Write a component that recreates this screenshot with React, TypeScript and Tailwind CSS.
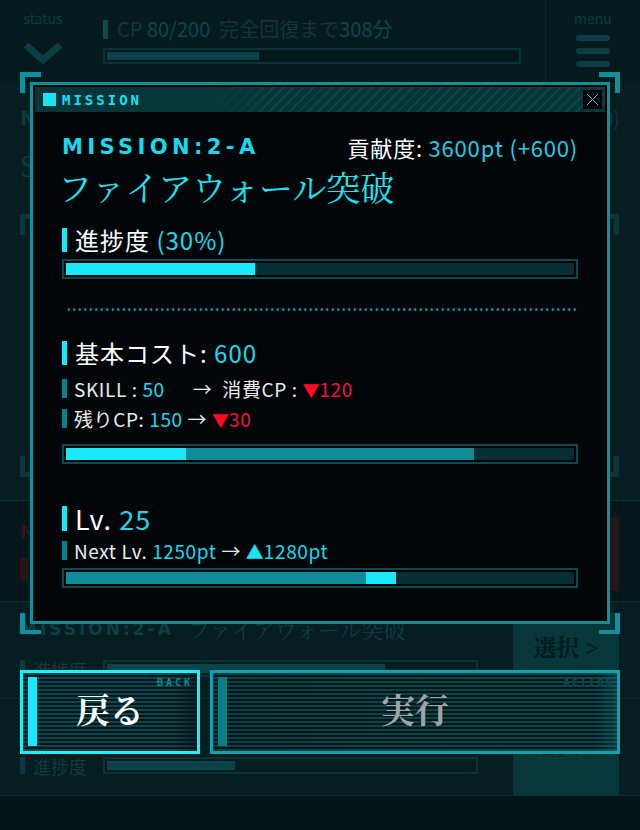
import type { ReactNode } from "react"

const sans = "font-['Noto_Sans_CJK_JP','Noto_Sans',sans-serif]"
const serif = "font-['Liberation_Serif','Noto_Serif_CJK_JP','Noto_Sans_CJK_JP',serif]"
const tech = "font-['DejaVu_Sans','Noto_Sans_CJK_JP',sans-serif]"
const pixel = "font-['DejaVu_Sans_Mono',monospace]"

const stripes =
  "bg-[repeating-linear-gradient(180deg,#0c464c_0px,#0c464c_2px,#03171b_2px,#03171b_4px)]"

function Meter({ children }: { children: ReactNode }) {
  return (
    <div className="h-[20px] border-2 border-[#0a4a52] bg-black p-[2px]">
      <div className="flex h-full bg-[#062f35]">{children}</div>
    </div>
  )
}

function Heading({ children }: { children: ReactNode }) {
  return (
    <div className="flex h-[24px] items-center gap-[8px]">
      <span className="h-full w-[5px] bg-[#1ae6f6]" />
      <span className="text-[24px] leading-none tracking-[1px] text-white">{children}</span>
    </div>
  )
}

function SubLine({ children }: { children: ReactNode }) {
  return (
    <div className="flex h-[19px] items-center gap-[7px]">
      <span className="h-full w-[5px] bg-[#0d7f8a]" />
      <span className="whitespace-pre text-[19px] leading-none tracking-[0.6px] text-[#ececec]">{children}</span>
    </div>
  )
}

function Corner({ pos }: { pos: string }) {
  return <span className={`absolute h-[21px] w-[21px] border-[#0f909b] ${pos}`} />
}

function BgRow({ fill, title }: { fill: string; title: boolean }) {
  return (
    <div className="flex h-[97px] border-b border-[#0a2b30] pl-[20px] pr-[21px]">
      <div className="flex flex-1 flex-col">
        <div className={`mt-[16px] flex h-[24px] items-center gap-[14px] ${title ? "" : "opacity-0"}`}>
          <span className={`${tech} text-[17px] font-bold tracking-[3px] text-[#0e3d43]`}>MISSION:2-A</span>
          <span className={`${serif} text-[22px] text-[#113c42]`}>ファイアウォール突破</span>
        </div>
        <div className="mt-[18px] flex h-[17px] items-center">
          <span className="h-full w-[5px] bg-[#0a3a40]" />
          <span className="ml-[8px] w-[70px] text-[18px] leading-none text-[#123b40]">進捗度</span>
          <div className="h-[17px] w-[375px] border-2 border-[#0a3338] p-[2px]">
            <div className={`h-full bg-[#0b4349] ${fill}`} />
          </div>
        </div>
      </div>
      <div className="mt-[11px] flex h-[86px] w-[106px] items-start justify-center bg-[#07363b] pt-[24px]">
        <span className={`${serif} text-[23px] font-bold leading-none text-[#021a1d]`}>選択 &gt;</span>
      </div>
    </div>
  )
}

export default function App() {
  return (
    <div className={`relative h-[830px] w-[640px] overflow-hidden bg-[#061d21] ${sans}`}>
      {/* background screen */}
      <div className="flex h-full flex-col">
        <header className="flex h-[82px] bg-[#041a1d]">
          <div className="flex w-[86px] flex-col items-center pt-[8px]">
            <span className="text-[14px] leading-[20px] text-[#0c3b41]">status</span>
            <svg width="40" height="22" viewBox="0 0 40 22" className="mt-[14px]">
              <polyline points="3,3 20,18 37,3" fill="none" stroke="#0b3e44" strokeWidth="7" />
            </svg>
          </div>
          <div className="flex-1 pl-[17px] pt-[19px]">
            <div className="flex h-[20px] items-center gap-[9px]">
              <span className="h-[19px] w-[5px] bg-[#0b4a50]" />
              <span className="whitespace-pre text-[20px] leading-none text-[#12363a]">
                CP <span className="text-[#0c474d]">80/200</span>  完全回復まで
                <span className="text-[#0c474d]">308分</span>
              </span>
            </div>
            <div className="mt-[9px] h-[16px] w-[418px] border-2 border-[#0a3237] p-[2px]">
              <div className="h-full w-[152px] bg-[#0b4349]" />
            </div>
          </div>
          <div className="flex w-[95px] flex-col items-center border-l border-[#0a2a2e] pt-[8px]">
            <span className="text-[14px] leading-[20px] text-[#0c3b41]">menu</span>
            <div className="mt-[7px] flex flex-col gap-[7px]">
              <span className="h-[6px] w-[34px] rounded-full bg-[#0b3e44]" />
              <span className="h-[6px] w-[34px] rounded-full bg-[#0b3e44]" />
              <span className="h-[6px] w-[34px] rounded-full bg-[#0b3e44]" />
            </div>
          </div>
        </header>

        <section className="flex h-[418px] flex-col px-[20px]">
          <div className="mt-[26px] flex h-[20px] items-center justify-between text-[20px] text-[#0c3a40]">
            <span className={`${tech} font-bold`}>NEW MISSION</span>
            <span>貢献度: 3000pt (+500)</span>
          </div>
          <div className={`${serif} mt-[22px] text-[32px] leading-none text-[#0c3a40]`}>SQLインジェクション</div>
          <div className="relative mt-[32px] mr-[1px] h-[263px]">
            <Corner pos="left-0 top-0 border-l-[5px] border-t-[5px] !border-[#0b353b]" />
            <Corner pos="right-0 top-0 border-r-[5px] border-t-[5px] !border-[#0b353b]" />
            <Corner pos="left-0 bottom-0 border-l-[5px] border-b-[5px] !border-[#0b353b]" />
            <Corner pos="right-0 bottom-0 border-r-[5px] border-b-[5px] !border-[#0b353b]" />
          </div>
        </section>

        <section className="flex h-[102px] border-y border-[#0b2c30] bg-[#05171a] pl-[20px] pr-[21px]">
          <div className="flex flex-1 flex-col">
            <span className={`${tech} mt-[22px] text-[18px] font-bold leading-none text-[#33161d]`}>MISSION:1-C</span>
            <span className="mt-[17px] h-[23px] w-[8px] bg-[#271318]" />
          </div>
          <div className="mt-[16px] h-[74px] w-[106px] bg-[#261619]" />
        </section>

        <BgRow fill="w-[278px]" title />
        <BgRow fill="w-[128px]" title={false} />

        <footer className="flex-1 bg-[#041518]" />
      </div>

      {/* dialog overlay */}
      <div className="absolute inset-0 flex flex-col px-[20px] pt-[72px]">
        <div className="relative p-[10px]">
          <Corner pos="left-0 top-0 border-l-[5px] border-t-[5px]" />
          <Corner pos="right-0 top-0 border-r-[5px] border-t-[5px]" />
          <Corner pos="left-0 bottom-0 border-l-[5px] border-b-[4px]" />
          <Corner pos="right-0 bottom-0 border-r-[5px] border-b-[4px]" />

          <div className="flex h-[542px] flex-col border-[3px] border-[#12909a] bg-black p-[2px]">
            <div className="flex h-[25px] items-center bg-[#07353a] bg-[linear-gradient(90deg,#07353a_30%,transparent_42%),repeating-linear-gradient(135deg,#0b454b_0px,#0b454b_2px,#07353a_2px,#07353a_7px)] pl-[8px] pr-[3px]">
              <span className="h-[13px] w-[13px] bg-[#19e6f5]" />
              <span className={`${pixel} ml-[6px] text-[14px] font-bold leading-none tracking-[3px] text-[#19e0f0]`}>MISSION</span>
              <span className="flex-1" />
              <svg width="19" height="19" viewBox="0 0 19 19" className="bg-black">
                <path d="M4 4 L15 15 M15 4 L4 15" stroke="#1ad8e8" strokeWidth="1" />
              </svg>
            </div>

            <div className="flex flex-1 flex-col bg-[#020609] px-[27px]">
              <div className="mt-[22px] flex h-[26px] items-center justify-between">
                <span className={`${tech} text-[21px] font-bold leading-none tracking-[4.4px] text-[#1ad9ec]`}>MISSION:2-A</span>
                <span className="text-[22px] leading-none tracking-[0.8px] text-white">
                  貢献度: <span className="text-[#22cde4]">3600pt (+600)</span>
                </span>
              </div>
              <div className={`${serif} mt-[10px] -ml-[4px] flex h-[40px] items-center text-[34px] leading-none text-[#1de3f3]`}>
                ファイアウォール突破
              </div>

              <div className="mt-[18px]">
                <Heading>
                  進捗度 <span className="text-[#1ad9ec]">(30%)</span>
                </Heading>
              </div>
              <div className="mt-[7px]">
                <Meter>
                  <div className="h-full w-[189px] bg-[#19e9f9]" />
                </Meter>
              </div>

              <div className="mt-[29px] ml-[4px] h-[3px] bg-[radial-gradient(circle,#12a2ad_1px,transparent_1.5px)] bg-[length:5.5px_3px]" />

              <div className="mt-[30px]">
                <Heading>
                  基本コスト: <span className="text-[#1ad9ec]">600</span>
                </Heading>
              </div>
              <div className="mt-[14px]">
                <SubLine>
                  SKILL : <span className="text-[#1ad9ec]">50</span>
                  <span className="ml-[28px] mr-[10px]">→</span>
                  {"消費CP : "}
                  <span className="text-[#f3123a]">
                    <span className="text-[17px] tracking-normal text-[#ff0a22]">▼</span>120
                  </span>
                </SubLine>
              </div>
              <div className="mt-[11px]">
                <SubLine>
                  残りCP: <span className="text-[#1ad9ec]">150</span> →{" "}
                  <span className="text-[#f3123a]">
                    <span className="text-[17px] tracking-normal text-[#ff0a22]">▼</span>30
                  </span>
                </SubLine>
              </div>
              <div className="mt-[16px]">
                <Meter>
                  <div className="h-full w-[120px] bg-[#19e9f9]" />
                  <div className="h-full w-[288px] bg-[#0f8b97]" />
                </Meter>
              </div>

              <div className="mt-[42px] flex h-[25px] items-center gap-[8px]">
                <span className="h-full w-[5px] bg-[#1ae6f6]" />
                <span className="text-[27px] leading-none tracking-[1px] text-white">
                  Lv. <span className="text-[#1ad9ec]">25</span>
                </span>
              </div>
              <div className="mt-[10px]">
                <SubLine>
                  Next Lv. <span className="text-[#1ad9ec]">1250pt</span> →{" "}
                  <span className="text-[#1ad9ec]">
                    <span className="text-[18px] tracking-normal text-[#19e4f4]">▲</span>1280pt
                  </span>
                </SubLine>
              </div>
              <div className="mt-[8px]">
                <Meter>
                  <div className="h-full w-[300px] bg-[#0f8b97]" />
                  <div className="h-full w-[30px] bg-[#19e9f9]" />
                </Meter>
              </div>
            </div>
          </div>
        </div>

        <div className="mt-[36px] flex gap-[10px]">
          <button className={`relative flex h-[84px] w-[180px] items-center justify-center border-[3px] border-[#1cf0fa] ${stripes}`}>
            <span className="absolute inset-0 bg-[linear-gradient(90deg,transparent_85%,rgba(3,23,27,0.6))]" />
            <span className="absolute bottom-[5px] left-[5px] top-[4px] w-[9px] bg-[#1ae8f8]" />
            <span className={`${pixel} absolute right-[4px] top-[5px] text-[10px] font-bold leading-none tracking-[3px] text-[#0e8a94]`}>BACK</span>
            <span className={`${serif} relative text-[34px] font-bold leading-none text-white`}>戻る</span>
          </button>
          <button className={`relative flex h-[84px] flex-1 items-center justify-center border-[3px] border-[#11a3ac] ${stripes}`}>
            <span className="absolute inset-0 bg-[linear-gradient(90deg,rgba(3,23,27,0.15),transparent_95%,rgba(20,110,118,0.4))]" />
            <span className="absolute bottom-[5px] left-[5px] top-[4px] w-[9px] bg-[#0d7d87]" />
            <span className={`${pixel} absolute right-[3px] top-[5px] text-[10px] font-bold leading-none tracking-[2.4px] text-[#0b4a52]`}>ACTION</span>
            <span className={`${serif} relative text-[34px] font-bold leading-none text-[#a3a3a3]`}>実行</span>
          </button>
        </div>
      </div>
    </div>
  )
}
